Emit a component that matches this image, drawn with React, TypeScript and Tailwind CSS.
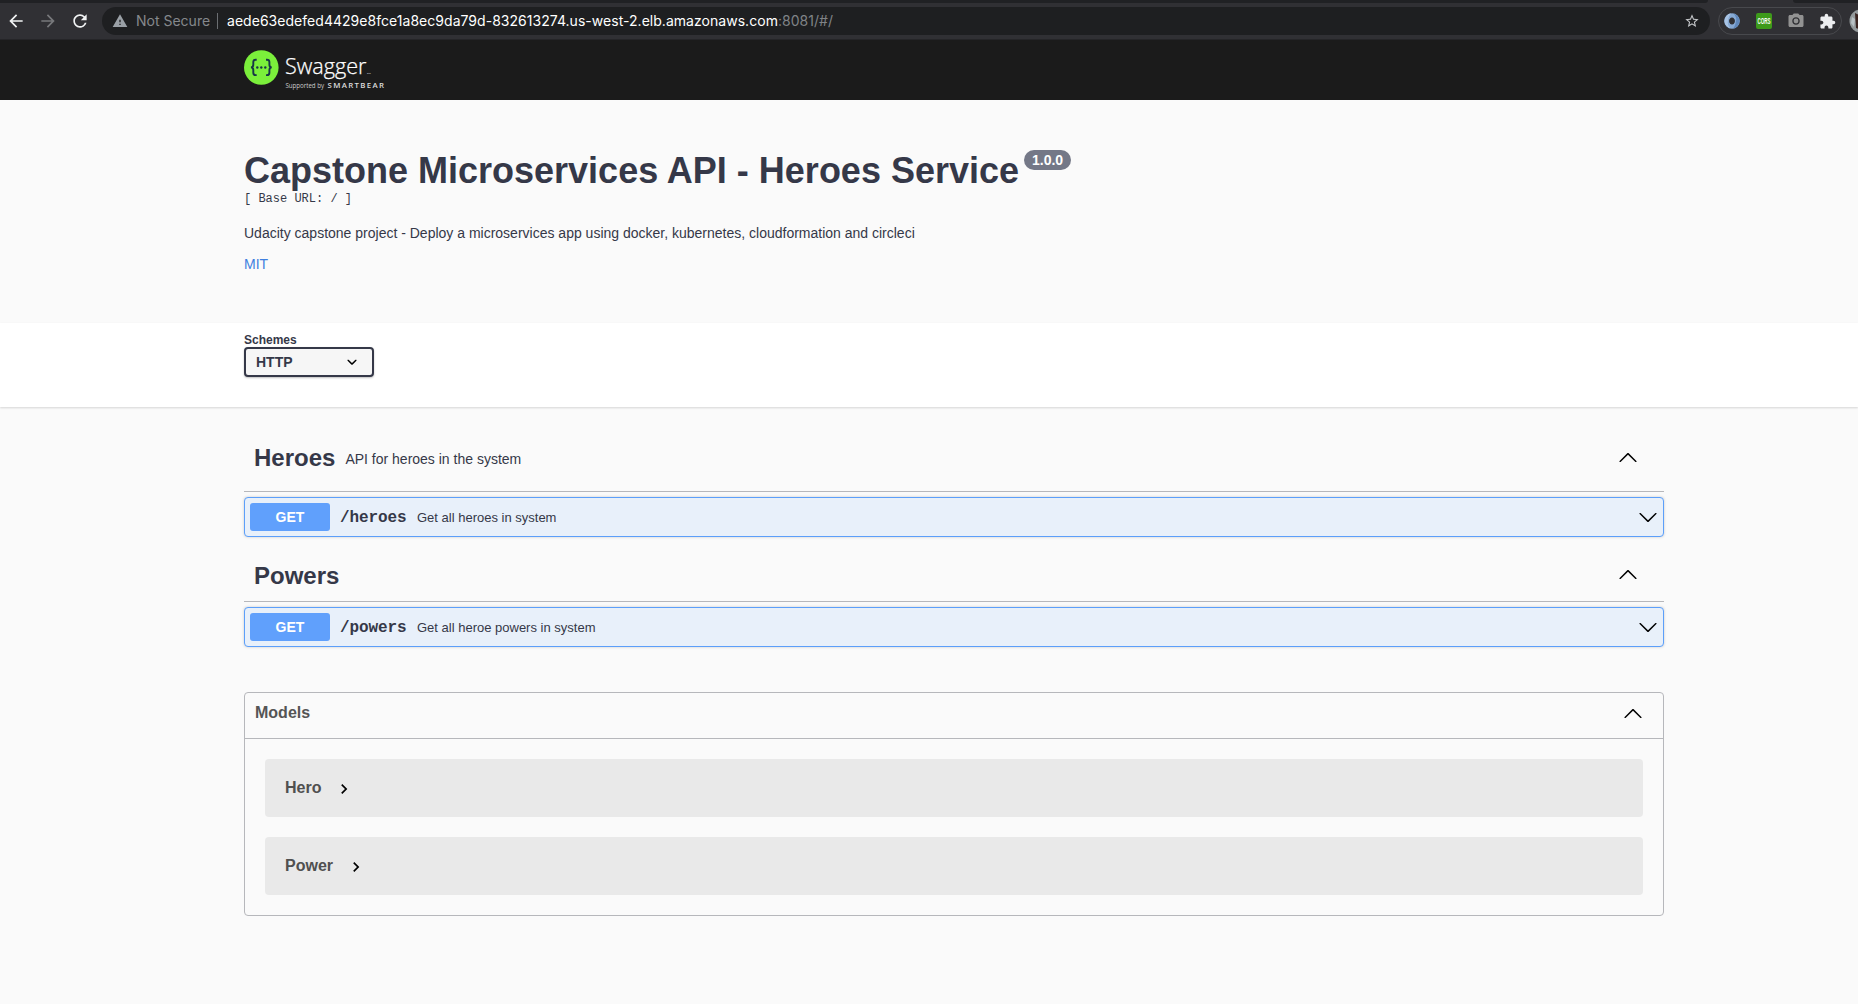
import React from "react";
import {
  MdArrowBack,
  MdArrowForward,
  MdRefresh,
  MdWarning,
  MdStarBorder,
  MdExtension,
  MdPhotoCamera,
} from "react-icons/md";

function LargeArrow({ up = false }: { up?: boolean }) {
  return (
    <svg viewBox="0 0 20 20" className={up ? "size-5 shrink-0 rotate-180" : "size-5 shrink-0"}>
      <path d="M17.418 6.109c.272-.268.709-.268.979 0s.271.701 0 .969l-7.908 7.83c-.27.268-.707.268-.979 0l-7.908-7.83c-.27-.268-.27-.701 0-.969.271-.268.709-.268.979 0L10 13.25l7.418-7.141z" />
    </svg>
  );
}

function BrowserBar() {
  return (
    <div className="h-10 border-b border-[#252528] bg-[#303034] font-[Inter,sans-serif]">
      <div className="flex h-[3px] bg-[#303034]">
        <div className="w-[1708px] rounded-br bg-[#202124]" />
        <div className="w-[85px]" />
        <div className="flex-1 rounded-bl bg-[#202124]" />
      </div>
      <div className="flex h-9 items-center overflow-hidden">
        <MdArrowBack className="ml-[6px] size-5 shrink-0 text-[#f1f3f4]" />
        <MdArrowForward className="ml-3 size-5 shrink-0 text-[#77787b]" />
        <MdRefresh className="ml-3 size-5 shrink-0 text-[#f1f3f4]" />
        <div className="ml-3 flex h-7 w-[1608px] shrink-0 items-center rounded-full bg-[#1e1f21]">
          <MdWarning className="ml-[10px] size-4 shrink-0 text-[#9aa0a6]" />
          <span className="ml-2 w-[73px] text-sm whitespace-nowrap text-[#85888c]">Not Secure</span>
          <span className="ml-2 h-4 w-px bg-[#6b6e72]" />
          <span className="ml-[9px] text-sm tracking-[0.033px] whitespace-nowrap text-white">
            aede63edefed4429e8fce1a8ec9da79d-832613274.us-west-2.elb.amazonaws.com
            <span className="text-[#808387]">:8081/#/</span>
          </span>
          <MdStarBorder className="mr-[10px] ml-auto size-4 shrink-0 text-[#c6c8cb]" />
        </div>
        <div className="ml-2 flex h-7 w-[124px] shrink-0 items-center rounded-full border border-[#48494d]">
          <svg viewBox="0 0 16 16" className="ml-[5px] size-4 shrink-0">
            <circle cx="8" cy="8" r="5.3" fill="none" stroke="#86a9d4" strokeWidth="5" />
            <path d="M7 .3C3 1 .2 5 .5 9c.5 3 3 5.500 6 6.500-2-2-3.500-5-2.500-8 .5-3 1.500-5 3-7.200z" fill="#a9c4e4" />
            <path d="M9 15.700c4-.7 6.800-4.700 6.500-8.700-.5-3-3-5.500-6-6.500 2 2 3.500 5 2.500 8-.5 3-1.500 5-3 7.200z" fill="#5f87bb" />
            <ellipse cx="8" cy="8" rx="2.500" ry="3.600" fill="#303034" />
          </svg>
          <svg viewBox="0 0 16 16" className="ml-4 size-4 shrink-0 overflow-visible">
            <rect width="16" height="16" rx="2" fill="#3d9a1b" />
            <text x="1.500" y="11" textLength="13" lengthAdjust="spacingAndGlyphs" fontSize="8.500" fontWeight="700" fill="#fff" fontFamily="Liberation Sans">CORS</text>
          </svg>
          <MdPhotoCamera className="ml-[15px] size-[18px] shrink-0 text-[#929292]" />
          <MdExtension className="ml-[14px] size-[17px] shrink-0 text-[#eceef0]" />
        </div>
        <svg viewBox="0 0 24 24" className="ml-[7px] size-6 shrink-0">
          <circle cx="12" cy="12" r="11.500" fill="#93999b" />
          <path d="M6 4l4 2v14l-3-1z" fill="#3a2420" />
          <path d="M3 8l3 2-1 8-3-4z" fill="#b8c1c4" />
        </svg>
      </div>
    </div>
  );
}

function SwaggerLogo() {
  return (
    <svg viewBox="0 0 150 60" className="h-[60px] w-[150px]" fill="#fff" fontFamily="Open Sans">
      <circle cx="17.300" cy="27.500" r="17.300" fill="#7bef3b" />
      <g fill="none" stroke="#173647" strokeWidth="1.900">
        <path d="M12.700 19.700h-1c-1.700 0-2.400.8-2.400 2.400v2.700c0 1.600-.8 2.500-2.300 2.600 1.500.1 2.300 1 2.300 2.600v2.700c0 1.600.7 2.400 2.400 2.400h1" />
        <path d="M22 19.700h1c1.700 0 2.400.8 2.400 2.400v2.700c0 1.600.8 2.500 2.300 2.600-1.500.1-2.300 1-2.300 2.600v2.700c0 1.600-.7 2.400-2.400 2.400h-1" />
      </g>
      <g fill="#173647">
        <circle cx="13.300" cy="27.500" r="1.200" />
        <circle cx="17.300" cy="27.500" r="1.200" />
        <circle cx="21.300" cy="27.500" r="1.200" />
      </g>
      <text x="41" y="34" fontSize="22.500" fontWeight="300" textLength="81.500" lengthAdjust="spacingAndGlyphs" stroke="#fff" strokeWidth=".25">Swagger</text>
      <text x="123" y="34" fontSize="2.500">TM</text>
      <text x="41.500" y="48" fontSize="6.200" textLength="38.500" fill="#ccc">Supported by</text>
      <text x="83.500" y="48" fontSize="7.800" fontWeight="600" textLength="56.500" fill="#ddd">SMARTBEAR</text>
    </svg>
  );
}

function Operation({ path, summary }: { path: string; summary: string }) {
  return (
    <div className="mt-[5px] flex h-10 items-center rounded border border-[#5c9ffa] bg-[#e8f0fa] px-[5px] shadow-[0_0_3px_rgba(0,0,0,0.19)]">
      <span className="h-7 w-20 rounded-[3px] bg-[#60a0fc] text-center text-sm leading-7 font-bold text-white">GET</span>
      <span className="ml-[10px] w-[67px] pt-px font-['Liberation_Mono',monospace] text-base leading-7 font-bold tracking-[-0.1px]">{path}</span>
      <span className="ml-[10px] flex-1 pt-px text-[13px]">{summary}</span>
      <LargeArrow />
    </div>
  );
}

function Model({ name }: { name: string }) {
  return (
    <div className="flex h-[58px] items-center rounded bg-[#e9e9e9] px-5 text-base font-bold text-[#505050]">
      <span className="pb-px">{name}</span>
      <svg viewBox="0 0 24 24" className="mt-[2px] ml-[13px] size-5" fill="#000">
        <path d="M10 6L8.590 7.410 13.170 12l-4.580 4.590L10 18l6-6z" />
      </svg>
    </div>
  );
}

export default function App() {
  return (
    <div className="h-[1004px] w-[1858px] overflow-hidden bg-[#fafafa] font-['Liberation_Sans',Arial,sans-serif] text-[#353848]">
      <BrowserBar />
      <header className="h-[60px] bg-[#1b1b1b] pl-[244px]">
        <SwaggerLogo />
      </header>

      <section className="h-[223px] px-[244px] pt-[50px]">
        <div className="flex items-start">
          <h1 className="text-[36px] leading-[42px] font-bold whitespace-nowrap">Capstone Microservices API - Heroes Service</h1>
          <span className="ml-[5px] h-5 w-[47px] rounded-full bg-[#747887] text-center text-sm leading-5 font-bold text-white">1.0.0</span>
        </div>
        <pre className="font-['Liberation_Mono',monospace] text-xs leading-[14px]">[ Base URL: / ]</pre>
        <p className="mt-[19px] text-sm leading-4">Udacity capstone project - Deploy a microservices app using docker, kubernetes, cloudformation and circleci</p>
        <a className="mt-[15px] block text-sm leading-4 text-[#3f7fdf]">MIT</a>
      </section>

      <section className="h-[84px] bg-white px-[244px] pt-[9px] shadow-[0_1px_2px_rgba(0,0,0,0.15)]">
        <label className="block pt-px text-xs leading-[14px] font-bold">Schemes</label>
        <div className="flex h-[30px] w-[130px] items-center justify-between rounded border-2 border-[#353848] bg-[#f6f6f6] pr-[10px] pl-[10px] text-sm font-bold shadow-[0_1px_2px_rgba(0,0,0,0.25)]">
          <span className="pb-px">HTTP</span>
          <svg viewBox="0 0 20 20" className="size-5">
            <path d="M13.418 7.859c.271-.268.709-.268.978 0 .27.268.272.701 0 .969l-3.908 3.830c-.27.268-.707.268-.979 0l-3.908-3.830c-.27-.267-.27-.701 0-.969.271-.268.709-.268.978 0L10 11l3.418-3.141z" />
          </svg>
        </div>
      </section>

      <main className="ml-[244px] w-[1420px] pt-[25px]">
        <div className="flex h-[60px] items-start border-b border-[#b6b7bb] pr-[26px] pl-[10px]">
          <h2 className="mt-[12px] text-2xl leading-7 font-bold">Heroes</h2>
          <p className="mt-[19px] ml-[10px] flex-1 text-sm leading-4">API for heroes in the system</p>
          <div className="mt-4">
            <LargeArrow up />
          </div>
        </div>
        <Operation path="/heroes" summary="Get all heroes in system" />
        <div className="mt-[15px] flex h-[50px] items-start justify-between border-b border-[#b6b7bb] pr-[26px] pl-[10px]">
          <h2 className="mt-[10px] text-2xl leading-7 font-bold">Powers</h2>
          <div className="mt-[13px]">
            <LargeArrow up />
          </div>
        </div>
        <Operation path="/powers" summary="Get all heroe powers in system" />
        <section className="mt-[45px] h-[224px] rounded border border-[#b6b7bb]">
          <div className="flex h-[46px] items-start justify-between border-b border-[#b6b7bb] pr-5 pl-[10px]">
            <h3 className="mt-[10px] text-base leading-5 font-bold text-[#555]">Models</h3>
            <div className="mt-[11px]">
              <LargeArrow up />
            </div>
          </div>
          <div className="flex flex-col gap-5 p-5">
            <Model name="Hero" />
            <Model name="Power" />
          </div>
        </section>
      </main>
    </div>
  );
}
